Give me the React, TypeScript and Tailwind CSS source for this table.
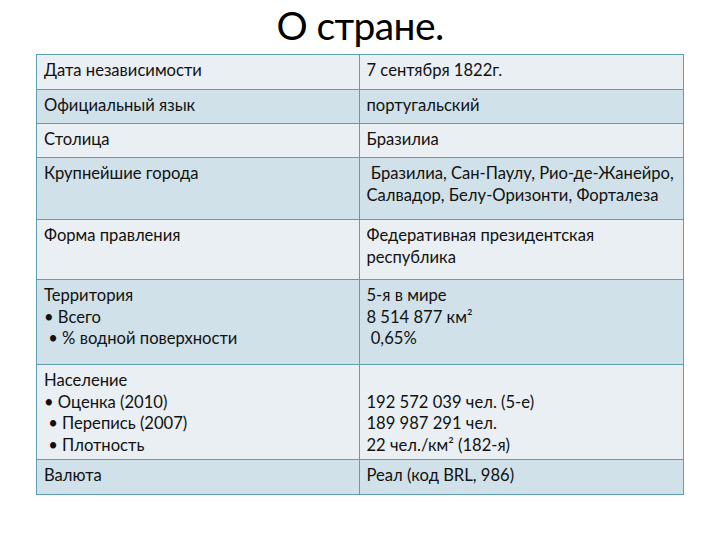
import React from "react";

type Row = {
  label: string[];
  value: string[];
  h: string;
  bg: string;
};

const light = "bg-[#e9eff3]";
const dark = "bg-[#d0e1e9]";

const rows: Row[] = [
  { label: ["Дата независимости"], value: ["7 сентября 1822г."], h: "h-[35px]", bg: light },
  { label: ["Официальный язык"], value: ["португальский"], h: "h-[34px]", bg: dark },
  { label: ["Столица"], value: ["Бразилиа"], h: "h-[34px]", bg: light },
  {
    label: ["Крупнейшие города"],
    value: [" Бразилиа, Сан-Паулу, Рио-де-Жанейро,", "Салвадор, Белу-Оризонти, Форталеза"],
    h: "h-[62px]",
    bg: dark,
  },
  {
    label: ["Форма правления"],
    value: ["Федеративная президентская", "республика"],
    h: "h-[60px]",
    bg: light,
  },
  {
    label: ["Территория", "• Всего", " • % водной поверхности"],
    value: ["5-я в мире", "8 514 877 км²", " 0,65%"],
    h: "h-[85px]",
    bg: dark,
  },
  {
    label: ["Население", "• Оценка (2010)", " • Перепись (2007)", " • Плотность"],
    value: ["\u00a0", "192 572 039 чел. (5-е)", "189 987 291 чел.", "22 чел./км² (182-я)"],
    h: "h-[95px]",
    bg: light,
  },
  { label: ["Валюта"], value: ["Реал (код BRL, 986)"], h: "h-[34px]", bg: dark },
];

const Cell = ({ lines, last }: { lines: string[]; last?: boolean }) => (
  <div
    className={`px-[7px] pt-[5px] ${last ? "w-[324px]" : "w-[323px] border-r border-[#5d9fb0]"}`}
  >
    {lines.map((l, i) => (
      <div key={i} className="whitespace-pre leading-[21.6px]">
        {l}
      </div>
    ))}
  </div>
);

export default function App() {
  return (
    <div
      className="w-[720px] h-[540px] bg-white text-[#111] overflow-hidden"
      style={{ fontFamily: "Lato, 'Liberation Sans', sans-serif" }}
    >
      <div className="h-[54px] pb-[4px] flex items-center justify-center text-[39px] tracking-[-0.6px] leading-none text-black">
        О стране.
      </div>
      <div className="ml-[36px] w-[648px] border border-[#5d9fb0] text-[16.6px]">
        {rows.map((r, i) => (
          <div
            key={i}
            className={`flex ${r.h} ${r.bg} ${i < rows.length - 1 ? "border-b border-[#5d9fb0]" : ""}`}
          >
            <Cell lines={r.label} />
            <Cell lines={r.value} last />
          </div>
        ))}
      </div>
    </div>
  );
}
